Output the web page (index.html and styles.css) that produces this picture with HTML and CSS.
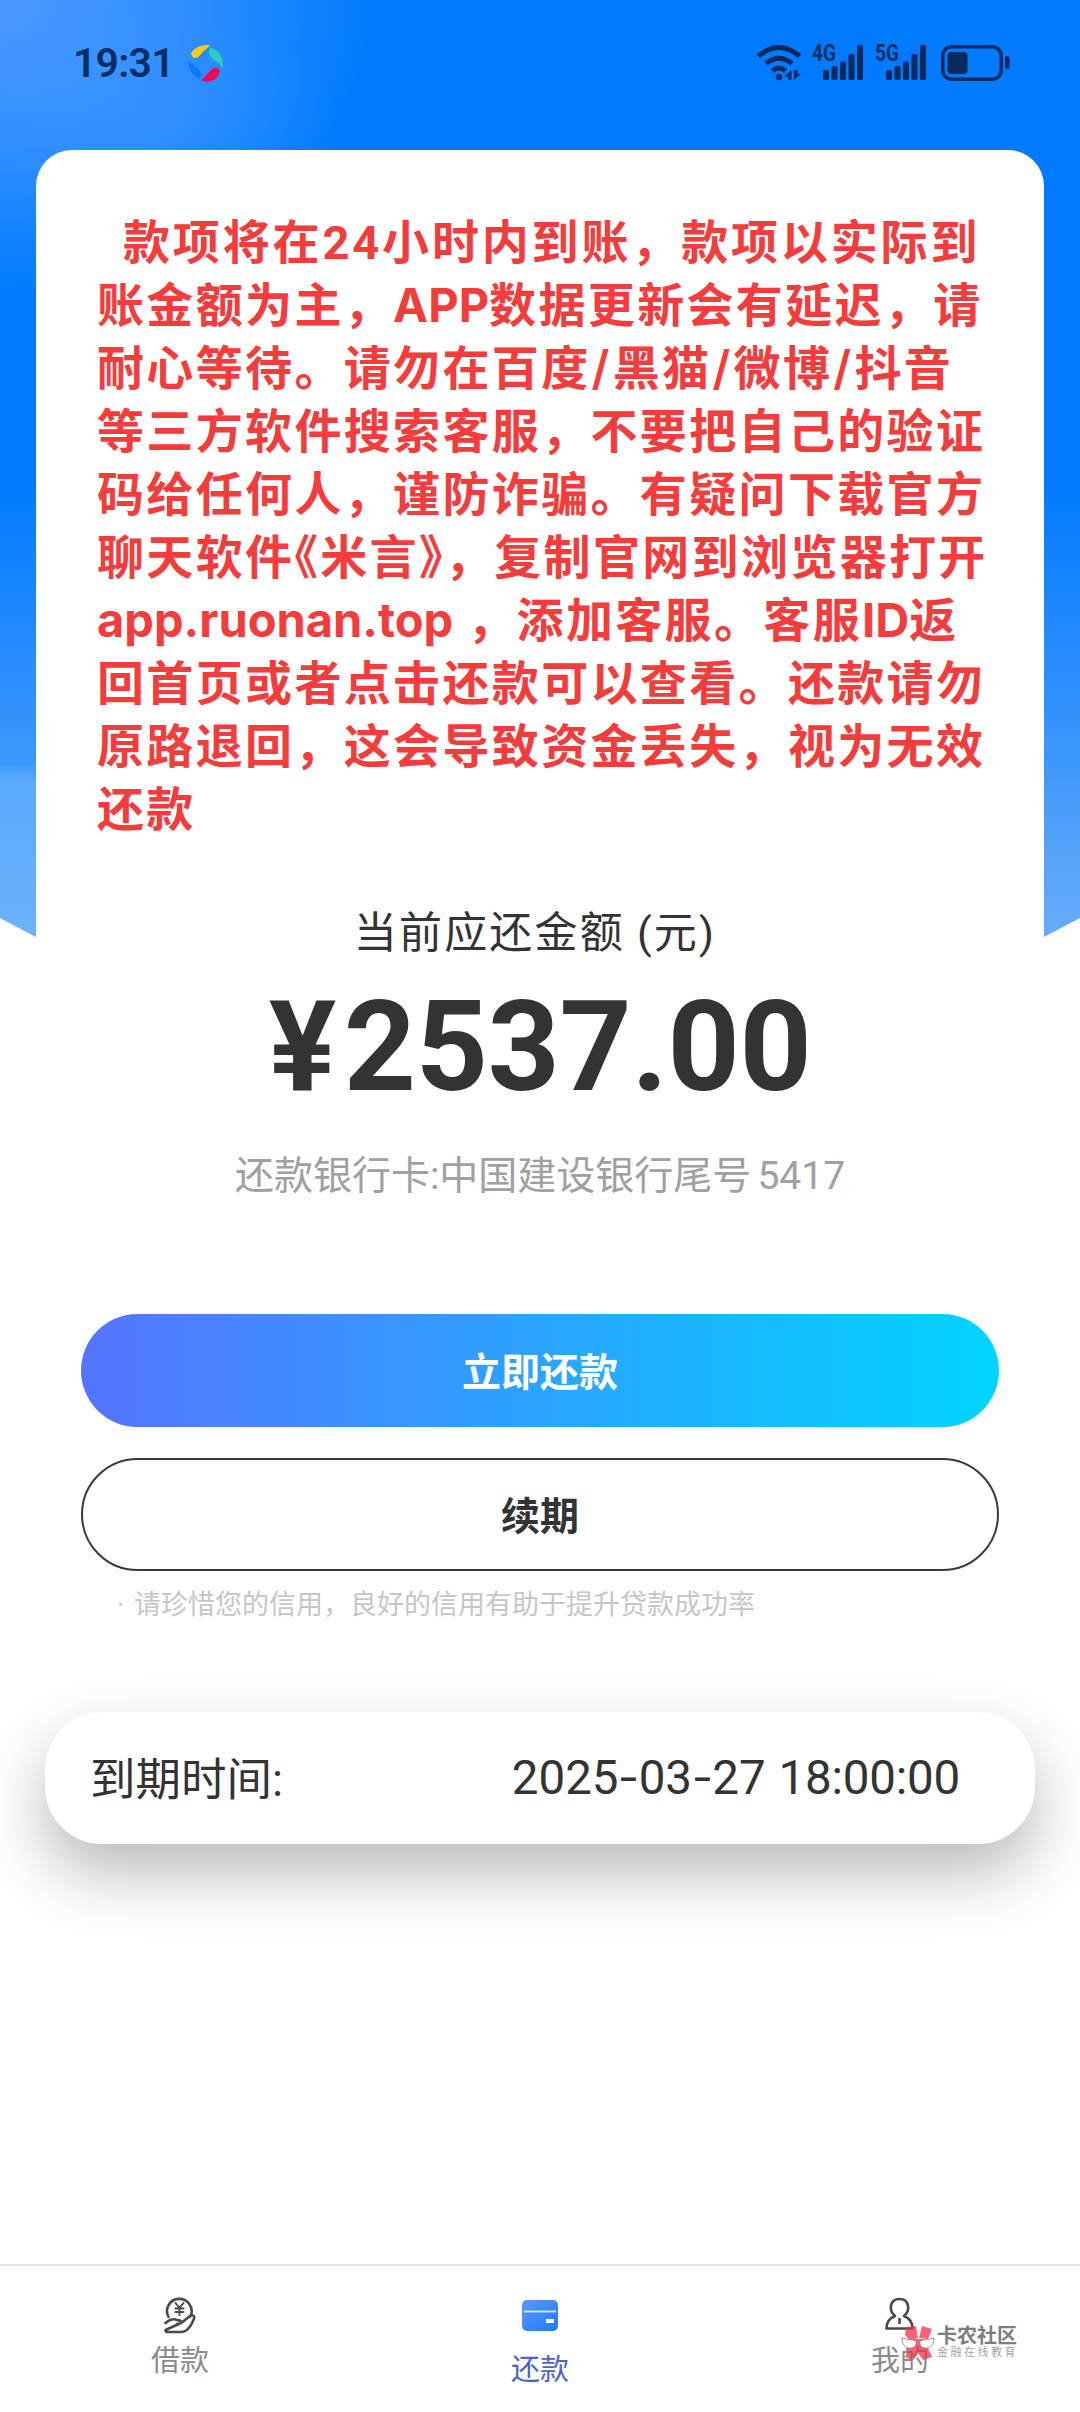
FILE: index.html
```html
<!DOCTYPE html>
<html lang="zh-CN">
<head>
<meta charset="utf-8">
<title>还款</title>
<link rel="stylesheet" href="styles.css">
</head>
<body>
<div class="screen">
  <header class="status">
    <div class="status-left">
      <span class="clock">19:31</span>
      <svg class="app-dot" viewBox="0 0 36 38" width="36" height="38">
        <path d="M3 9C8 2 14 1 22 1C20 4 15 7 13 10C10 15 4 16 3 9Z" fill="#fbcb1b"/>
        <path d="M22 4C31 6 36 13 35 25C33 19 28 18 24 14C20 10 21 7 22 4Z" fill="#2bcfc0"/>
        <path d="M30 24C34 26 30 33 26 36C22 38 16 38 13 36C18 33 18 30 22 27C25 24 27 23 30 24Z" fill="#f5054f"/>
        <path d="M0 15C1 19 5 20 9 24C13 28 14 31 12 35C4 32 0 25 0 15Z" fill="#0a7bff"/>
      </svg>
    </div>
    <div class="status-right">
      <svg width="44" height="36" viewBox="0 0 44 36" fill="none" stroke="#052a5e" stroke-width="5">
        <path d="M1.500 11Q22-6 42.500 11M9 18.500Q22 8 35 18.500M15.500 26Q22 20 28.500 26"/>
        <circle cx="22" cy="32" r="3.200" fill="#052a5e" stroke="none"/>
        <path d="M34.500 35V25L27.500 31.500H31V35ZM37 25V35L44 28.500H40.500V25Z" fill="#052a5e" stroke="none"/>
      </svg>
      <div class="signal"><span class="net">4G</span>
        <svg width="42" height="36" viewBox="0 0 42 36" fill="#052a5e"><rect x="1" y="25" width="6" height="10" rx="1.500"/><rect x="9.500" y="21" width="6" height="14" rx="1.500"/><rect x="18" y="16.500" width="6" height="18.500" rx="1.500"/><rect x="26.500" y="9" width="6" height="26" rx="1.500"/><rect x="35" y="0" width="6" height="35" rx="1.500"/></svg>
      </div>
      <div class="signal"><span class="net">5G</span>
        <svg width="42" height="36" viewBox="0 0 42 36" fill="#052a5e"><rect x="1" y="25" width="6" height="10" rx="1.500"/><rect x="9.500" y="21" width="6" height="14" rx="1.500"/><rect x="18" y="16.500" width="6" height="18.500" rx="1.500"/><rect x="26.500" y="9" width="6" height="26" rx="1.500"/><rect x="35" y="0" width="6" height="35" rx="1.500"/></svg>
      </div>
      <svg class="battery" width="70" height="36" viewBox="0 0 70 36"><rect x="1.750" y="1.750" width="58.500" height="32.500" rx="9" fill="none" stroke="#052a5e" stroke-width="3.500"/><rect x="6.500" y="7" width="20" height="22" rx="4" fill="#052a5e"/><rect x="64" y="11" width="4.500" height="13" rx="2" fill="#052a5e"/></svg>
    </div>
  </header>

  <main class="card">
    <div class="notice">
      <p class="l1">款项将在24小时内到账，款项以实际到</p>
      <p class="l2">账金额为主，<b>APP</b>数据更新会有延迟，请</p>
      <p class="l3">耐心等待。请勿在百度<s>/</s>黑猫<s>/</s>微博<s>/</s>抖音</p>
      <p class="l4">等三方软件搜索客服，不要把自己的验证</p>
      <p class="l5">码给任何人，谨防诈骗。有疑问下载官方</p>
      <p class="l6">聊天软件<i>《</i>米言<i>》</i>，复制官网到浏览器打开</p>
      <p class="l7"><b>app.ruonan.top</b> ，添加客服。客服<b>ID</b>返</p>
      <p class="l8">回首页或者点击还款可以查看。还款请勿</p>
      <p class="l9">原路退回，这会导致资金丢失，视为无效</p>
      <p class="l10">还款</p>
    </div>
    <div class="caption">当前应还金额<span class="unit">(元)</span></div>
    <div class="amount"><span class="yen">¥</span>2537.00</div>
    <div class="bank">还款银行卡:中国建设银行尾号<span class="tail">5417</span></div>
    <button class="btn primary">立即还款</button>
    <button class="btn outline">续期</button>
    <p class="tip"><span class="dot">·</span>请珍惜您的信用，良好的信用有助于提升贷款成功率</p>
  </main>

  <section class="due">
    <span class="due-label">到期时间:</span>
    <span class="due-time">2025<em>-</em>03<em>-</em>27 <span class="hms">18:00:00</span></span>
  </section>

  <nav class="tabs">
    <div class="tab">
      <svg width="32" height="37" viewBox="0 0 32 37" fill="none" stroke="#4a4a4a" stroke-width="2.600" stroke-linejoin="round" stroke-linecap="round">
        <path d="M4.500 20A12.300 12.300 0 1 1 27 18"/>
        <path d="M11.500 6L15.500 11L19.500 6M15.500 11V18M11.500 11.500H19.500M11.500 15H19.500" stroke-width="2"/>
        <path d="M1.500 26C5 22.500 10 21 14 23.500C17 23 18 25 16 26.500L13 27M16 26.500C21 24 24 20 27 18.500C30 17.500 31 20 29.500 23C27 29 23 34.500 18 35H3C1.500 35 1.500 34 1.500 33Z"/>
      </svg>
      <span>借款</span>
    </div>
    <div class="tab active">
      <svg width="50" height="44" viewBox="0 0 50 44">
        <defs><linearGradient id="cardfill" x1="0" y1="0" x2="1" y2="1"><stop offset="0" stop-color="#5a9af5"/><stop offset="1" stop-color="#2279f5"/></linearGradient></defs>
        <rect x="7" y="6" width="36" height="31" rx="5" fill="url(#cardfill)"/>
        <path d="M9 17.500H41" stroke="#d5e7ff" stroke-width="1.800"/>
        <rect x="31" y="25" width="8" height="4" rx=".5" fill="#fff"/>
      </svg>
      <span>还款</span>
    </div>
    <div class="tab">
      <svg width="30" height="34" viewBox="0 0 30 34" fill="none" stroke="#45484c" stroke-width="2.600" stroke-linejoin="round">
        <path d="M10 19C3 13 5 2 14.500 2S26 13 19 19C24 21 27.500 25 27.500 31.500H1.500C1.500 25 5 21 10 19Z"/><path d="M14.500 21V27"/>
      </svg>
      <span class="mine">我的</span>
    </div>
  </nav>

  <div class="watermark">
    <svg width="34" height="34" viewBox="0 0 34 34">
      <g fill="#f0304a" fill-opacity=".75"><path d="M5 1L15 0L17 12L9 14L4 9ZM21 0L31 3L27 13L18 12Z"/><path d="M12 13L23 13L31 31L22 34L17 27L12 34L4 31Z"/></g>
      <g fill="#fff" stroke="#777" stroke-width=".8"><path d="M1 12C6 14 12 13 15 15C16 20 12 23 7 22C3 21 1 17 1 12ZM33 12C28 14 22 13 19 15C18 20 22 23 27 22C31 21 33 17 33 12Z"/></g>
    </svg>
    <div class="wm-text"><strong>卡农社区</strong><small>金融在线教育</small></div>
  </div>
</div>
</body>
</html>
```
FILE: styles.css
```css
* { box-sizing: border-box; margin: 0; padding: 0; }
body { width: 1080px; height: 2412px; background: #fefefe; overflow: hidden; }
.screen {
  position: relative; width: 1080px; height: 2412px;
  display: flex; flex-direction: column;
  font-family: Roboto, "Noto Sans CJK SC", sans-serif; color: #333;
}
.screen::before {
  content: ""; position: absolute; inset: 0 0 auto 0; height: 1000px; z-index: -1;
  clip-path: polygon(0 0, 100% 0, 100% 918px, 96.667% 937px, 50% 1000px, 3.333% 937px, 0 918px);
  background:
    linear-gradient(rgba(120,190,255,0), rgba(120,190,255,.42) 16px, rgba(120,190,255,.3)) 0 764px / 60px 236px no-repeat,
    radial-gradient(ellipse 380px 300px at 0 0, rgba(76,153,255,1), rgba(66,150,255,.75) 45%, rgba(0,123,255,0) 100%),
    radial-gradient(ellipse 190px 110px at 150px 120px, rgba(60,150,255,.5), rgba(0,123,255,0) 100%),
    linear-gradient(#007bff 0, #007bff 480px, #248aff 640px, #3795fb 740px, #55a3fa 850px, #65abfb 930px);
}
.status { height: 150px; flex: none; padding: 0 69px 24px 73px; display: flex; justify-content: space-between; align-items: center; color: #052f64; }
.status-left { display: flex; align-items: center; gap: 14px; }
.clock { font-size: 41px; font-weight: 600; letter-spacing: -.8px; line-height: 1; }
.status-right { display: flex; align-items: center; }
.signal { width: 52px; height: 36px; margin-left: 11px; position: relative; display: flex; justify-content: flex-end; }
.net { position: absolute; left: 0; top: 0; font-size: 23px; line-height: 18px; font-weight: 700; transform: scaleX(.83); transform-origin: 0 0; }
.battery { margin-left: 14px; }

.card { width: 1008px; height: 1560px; flex: none; margin: 0 36px; padding: 61px 45px 0; background: #fefefe; border-radius: 36px 36px 0 0; display: flex; flex-direction: column; align-items: center; }
.notice { width: 100%; padding-left: 16px; height: 630px; color: #f33c3c; font-size: 47px; font-weight: 700; line-height: 63px; letter-spacing: 2.350px; }
.notice p { white-space: pre; height: 63px; }
.notice b { font-family: Inter, sans-serif; font-weight: 700; letter-spacing: 0; line-height: 1; }
.notice s { font-family: Inter, sans-serif; font-weight: 600; text-decoration: none; line-height: 1; margin: 0 1px; }
.notice i { font-style: normal; font-feature-settings: "halt"; }
.notice .l1 { padding-left: 26px; letter-spacing: 2.850px; }
.caption { margin: 62px 10px 0 0; font-size: 43px; line-height: 60px; letter-spacing: 2.200px; }
.unit { margin-left: 12px; }
.amount { margin-top: 21px; font-size: 126px; line-height: 126px; font-weight: 700; letter-spacing: -.4px; }
.yen { margin-right: 8px; }
.bank { margin-top: 38px; font-size: 39px; line-height: 56px; color: #a0a0a0; white-space: nowrap; }
.tail { margin-left: 6px; }
.btn { width: 918px; height: 113px; flex: none; border-radius: 57px; border: 0; padding-bottom: 4px; font: 700 39px "Noto Sans CJK SC", sans-serif; }
.primary { margin-top: 110px; color: #fff; background: linear-gradient(90deg, #5574ff, #00d4ff); }
.outline { margin-top: 31px; color: #333; background: #fefefe; border: 2px solid #3a3a3a; }
.tip { align-self: flex-start; margin: 14px 0 0 36px; font-size: 27px; line-height: 40px; color: #c6c6c6; white-space: nowrap; }
.dot { margin-right: 10px; }

.due { width: 990px; height: 132px; flex: none; margin: 2px 45px 0; padding: 0 75px 0 45px; border-radius: 57px; background: #fefefe; box-shadow: 0 30px 60px rgba(0,0,0,.26); display: flex; justify-content: space-between; align-items: center; font-size: 45.500px; }
.due-label { padding-bottom: 4px; }
.due-time { font-size: 47.500px; }
.due-time em { font-style: normal; display: inline-block; margin: 0 3.500px; transform: scaleX(1.3); }
.hms { margin-left: 1px; letter-spacing: -.2px; }

.tabs { margin-top: auto; height: 148px; border-top: 2px solid #e4e4e4; display: grid; grid-template-columns: repeat(3, 1fr); flex: none; color: #8a8a8a; font-size: 29px; line-height: 40px; }
.tab { display: flex; flex-direction: column; align-items: center; padding-top: 31px; gap: 7px; }
.tab.active { color: #4866c6; padding-top: 28px; gap: 12px; }
.mine { padding-top: 3px; }
.watermark { position: absolute; left: 901px; top: 2326px; display: flex; gap: 2px; }
.wm-text { display: flex; flex-direction: column; color: #7d7d7d; white-space: nowrap; }
.wm-text strong { font-size: 20px; line-height: 20px; }
.wm-text small { font-size: 11px; line-height: 14px; letter-spacing: 2.500px; color: #a5a5a5; }
```
